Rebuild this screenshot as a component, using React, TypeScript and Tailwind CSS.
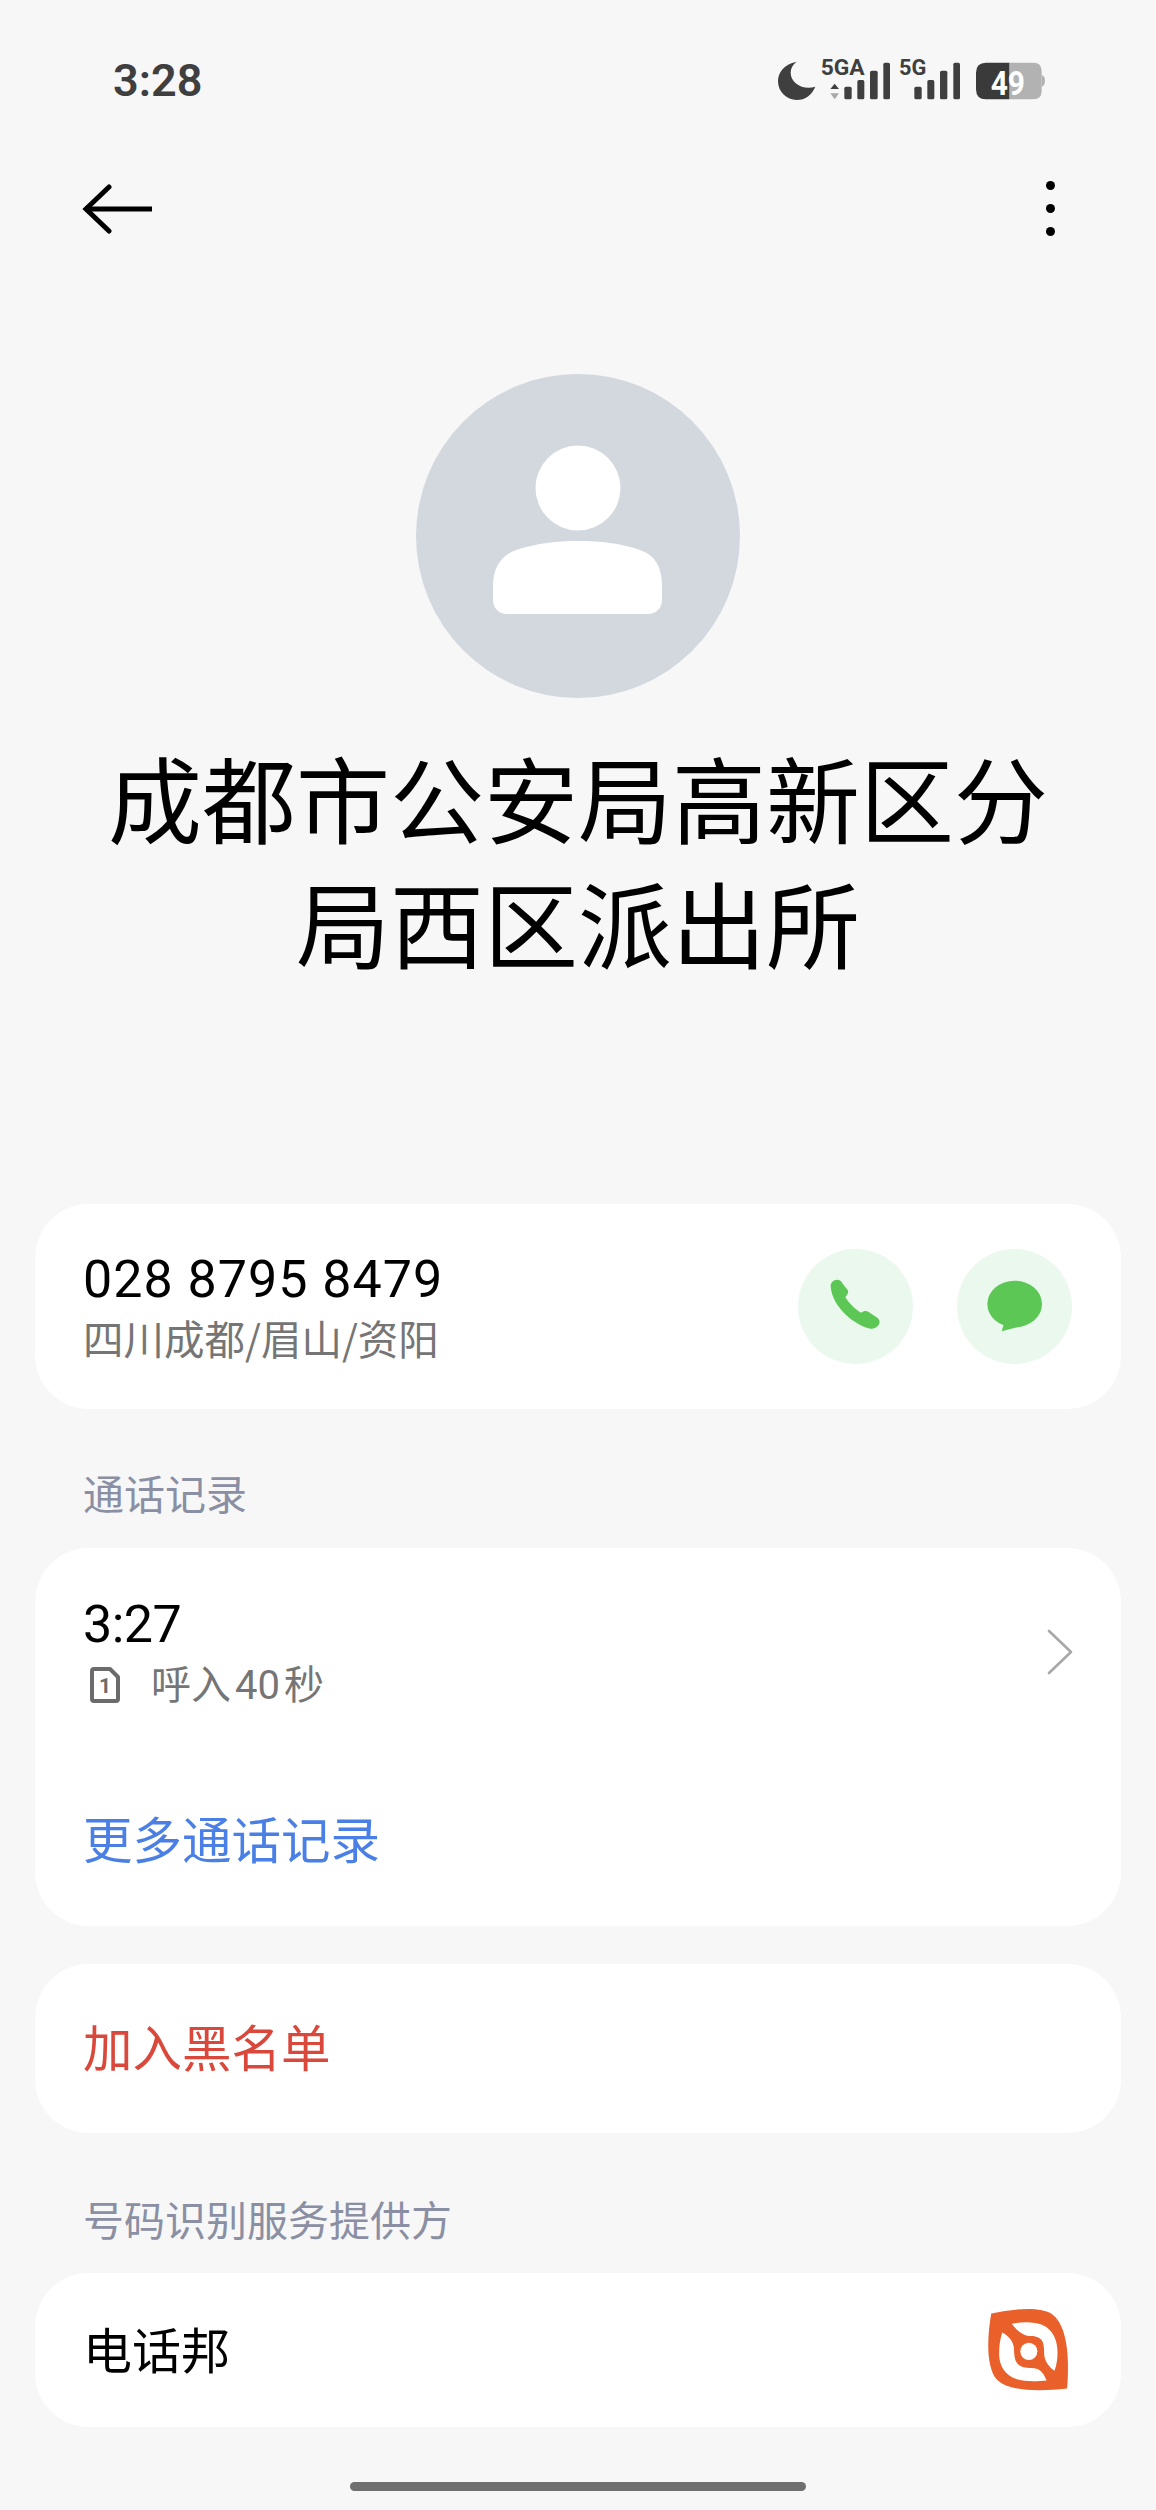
import React from "react";

function StatusIcons() {
  return (
    <svg viewBox="0 0 1020 240" width={340} height={80} className="block">
      <path d="M170 65 C130 72 114 100 114 124 C114 156 140 180 170 180 C196 180 216 164 226 140 C190 152 152 130 152 98 C152 84 158 74 170 65 Z" fill="#3f3f3f" />
      <text x="242" y="105" fontSize="66" fontWeight="700" fill="#3f3f3f" fontFamily="Roboto, sans-serif" textLength="132" lengthAdjust="spacingAndGlyphs">5GA</text>
      <path d="M284 131 L297 147 L271 147 Z" fill="#3f3f3f" />
      <path d="M284 178 L297 160 L271 160 Z" fill="#a8a8a8" />
      <rect x="313" y="140" width="22" height="38" rx="5" fill="#3f3f3f" />
      <rect x="352" y="120" width="21" height="58" rx="5" fill="#3f3f3f" />
      <rect x="390" y="92" width="23" height="86" rx="5" fill="#3f3f3f" />
      <rect x="430" y="68" width="20" height="110" rx="5" fill="#3f3f3f" />
      <text x="477" y="105" fontSize="66" fontWeight="700" fill="#3f3f3f" fontFamily="Roboto, sans-serif" textLength="82" lengthAdjust="spacingAndGlyphs">5G</text>
      <rect x="523" y="140" width="22" height="38" rx="5" fill="#3f3f3f" />
      <rect x="562" y="120" width="21" height="58" rx="5" fill="#3f3f3f" />
      <rect x="600" y="92" width="22" height="86" rx="5" fill="#3f3f3f" />
      <rect x="640" y="68" width="20" height="110" rx="5" fill="#3f3f3f" />
      <path d="M808 68 H880 Q905 68 905 93 V153 Q905 178 880 178 H808 Z" fill="#b2b2b2" />
      <path d="M905 105 Q915 108 915 122 Q915 136 905 140 Z" fill="#b2b2b2" />
      <path d="M808 68 H738 Q708 68 708 98 V148 Q708 178 738 178 H808 Z" fill="#3a3a3a" />
      <text x="752" y="165" fontSize="98" fontWeight="700" fill="#ffffff" fontFamily="Roboto, sans-serif" textLength="103" lengthAdjust="spacingAndGlyphs">49</text>
    </svg>
  );
}

function BackArrow() {
  return (
    <svg viewBox="0 0 71 50" width={71} height={50} className="block">
      <path d="M3 25 H70" stroke="#000" strokeWidth="5" strokeLinecap="butt" />
      <path d="M27 3 L4 25 L27 47" stroke="#000" strokeWidth="5" fill="none" strokeLinecap="round" strokeLinejoin="miter" />
    </svg>
  );
}

function Avatar() {
  return (
    <div className="flex justify-center">
      <svg viewBox="0 0 324 324" width={324} height={324} className="block">
        <circle cx="162" cy="162" r="162" fill="#d3d8df" />
        <circle cx="162" cy="114" r="42.5" fill="#fff" />
        <path d="M77 212 C77 193 86 181 100 176 C122 169 140 167 162 167 C184 167 204 169 224 176 C239 181 246 193 246 212 V226 C246 234 240 240 232 240 H91 C83 240 77 234 77 226 Z" fill="#fff" />
      </svg>
    </div>
  );
}

function PhoneButton() {
  return (
    <div className="w-[115px] h-[115px] rounded-full bg-[#ebf8ee] flex items-center justify-center">
      <svg viewBox="114 85 345 345" width={115} height={115} className="block">
        <path d="M212 197 C211 185 222 176 233 177 C241 178 246 184 249 191 L263 208 C266 213 264 219 260 224 L256 230 C263 243 277 258 296 272 L304 276 C311 270 319 270 326 274 L352 291 C360 297 361 306 355 314 C349 322 341 325 331 324 C290 317 216 262 212 197 Z" fill="#5cc755" />
      </svg>
    </div>
  );
}

function MessageButton() {
  return (
    <div className="w-[115px] h-[115px] rounded-full bg-[#ebf8ee] flex items-center justify-center">
      <svg viewBox="590 85 345 345" width={115} height={115} className="block">
        <ellipse cx="763" cy="250" rx="82" ry="70" fill="#5cc755" />
        <path d="M732 305 L724 332 L785 316 Z" fill="#5cc755" />
      </svg>
    </div>
  );
}

function SimIcon() {
  return (
    <svg viewBox="0 0 30 36" width={30} height={36} className="block">
      <path d="M4 2 H20 L28 10 V32 Q28 34 26 34 H4 Q2 34 2 32 V4 Q2 2 4 2 Z" fill="none" stroke="#6b6b6b" strokeWidth="4" strokeLinejoin="round" />
      <text x="15" y="26" textAnchor="middle" fontSize="21" fontWeight="700" fill="#6b6b6b" fontFamily="Roboto, sans-serif">1</text>
    </svg>
  );
}

function Logo() {
  return (
    <svg viewBox="78 84 242 246" width={83} height={84} className="block">
      <path d="M90 100 C160 85 235 80 268 102 C302 126 322 195 312 320 C230 328 140 330 105 292 C74 255 78 165 90 100 Z" fill="#e9602b" />
      <path d="M150 130 C180 124 218 124 240 134 C272 148 284 180 284 215 C284 235 281 252 275 268 C262 258 250 245 246 228 C244 215 246 195 240 182 C234 170 220 166 205 166 C190 166 172 160 150 130 Z" fill="#fff" />
      <path d="M122 156 C140 166 154 180 156 200 C158 220 156 240 172 252 C184 262 205 258 222 262 C236 265 244 278 252 296 C225 299 188 300 163 292 C128 280 112 250 113 215 C113 195 116 175 122 156 Z" fill="#fff" />
      <circle cx="200" cy="211" r="25" fill="#fff" />
    </svg>
  );
}

function Card({ children, className }: { children: React.ReactNode; className?: string }) {
  return <div className={`mx-[35px] bg-white rounded-[54px] ${className}`}>{children}</div>;
}

function App() {
  return (
    <div className="w-full min-h-[2510px] bg-[#f7f7f7] text-black font-['Roboto','Noto_Sans_CJK_SC',sans-serif]">
      <div className="h-[160px] flex items-center justify-between pl-[113px] pr-[76px]">
        <span className="text-[45px] font-semibold text-[#3f3f3f] leading-none">3:28</span>
        <StatusIcons />
      </div>

      <div className="h-[97px] flex items-center justify-between pl-[82px] pr-[101px]">
        <BackArrow />
        <div className="flex flex-col gap-[14px]">
          <div className="w-[9px] h-[9px] rounded-full bg-black" />
          <div className="w-[9px] h-[9px] rounded-full bg-black" />
          <div className="w-[9px] h-[9px] rounded-full bg-black" />
        </div>
      </div>

      <div className="mt-[117px]">
        <Avatar />
      </div>

      <h1 className="mt-[36px] px-[100px] text-center text-[94px] leading-[125px] font-normal font-['Noto_Sans_CJK_SC',sans-serif]">
        成都市公安局高新区分局西区派出所
      </h1>

      <Card className="mt-[220px] h-[205px] flex items-center justify-between pl-[48px] pr-[49px]">
        <div>
          <div className="text-[52px] leading-[64px] tracking-[1px]">028 8795 8479</div>
          <div className="text-[40.5px] leading-[54px] text-[#757575] font-['Noto_Sans_CJK_SC',sans-serif] -mt-[1px]">四川成都/眉山/资阳</div>
        </div>
        <div className="flex gap-[44px]">
          <PhoneButton />
          <MessageButton />
        </div>
      </Card>

      <div className="h-[139px] flex items-end pb-[28px] pl-[83px] text-[41px] leading-[56px] text-[#8a8fa3] font-['Noto_Sans_CJK_SC',sans-serif]">
        通话记录
      </div>

      <Card className="h-[378px] pt-[45px] pl-[48px] pr-[48px]">
        <div className="flex items-center justify-between">
          <div>
            <div className="text-[52px] leading-[64px] tracking-[-0.5px]">3:27</div>
            <div className="mt-[3px] h-[50px] flex items-center pl-[7px] gap-[31px]">
              <SimIcon />
              <span className="mb-[3px] text-[40px] leading-[50px] text-[#757575] font-['Noto_Sans_CJK_SC',sans-serif]">
                呼入<span className="mx-[4px] font-['Roboto',sans-serif]">40</span>秒
              </span>
            </div>
          </div>
          <svg viewBox="0 0 26 46" width={26} height={46} className="block">
            <path d="M2 2 L24 23 L2 44" fill="none" stroke="#a8a8a8" strokeWidth="2.6" strokeLinecap="round" strokeLinejoin="round" />
          </svg>
        </div>
        <div className="mt-[93px] text-[49.5px] leading-[70px] text-[#4a80e6] font-['Noto_Sans_CJK_SC',sans-serif]">更多通话记录</div>
      </Card>

      <Card className="mt-[38px] h-[169px] flex items-center pl-[48px]">
        <span className="mb-[5px] text-[49.5px] leading-[70px] text-[#d9483b] font-['Noto_Sans_CJK_SC',sans-serif]">加入黑名单</span>
      </Card>

      <div className="h-[140px] flex items-end pb-[27px] pl-[83px] text-[41px] leading-[56px] text-[#8a8fa3] font-['Noto_Sans_CJK_SC',sans-serif]">
        号码识别服务提供方
      </div>

      <Card className="h-[154px] flex items-center justify-between pl-[48px] pr-[51px]">
        <span className="mb-[5px] text-[49px] leading-[70px] font-['Noto_Sans_CJK_SC',sans-serif]">电话邦</span>
        <Logo />
      </Card>

      <div className="mt-[55px] mx-auto w-[456px] h-[9px] rounded-full bg-[#6f6f6f]" />
    </div>
  );
}

export default App;
